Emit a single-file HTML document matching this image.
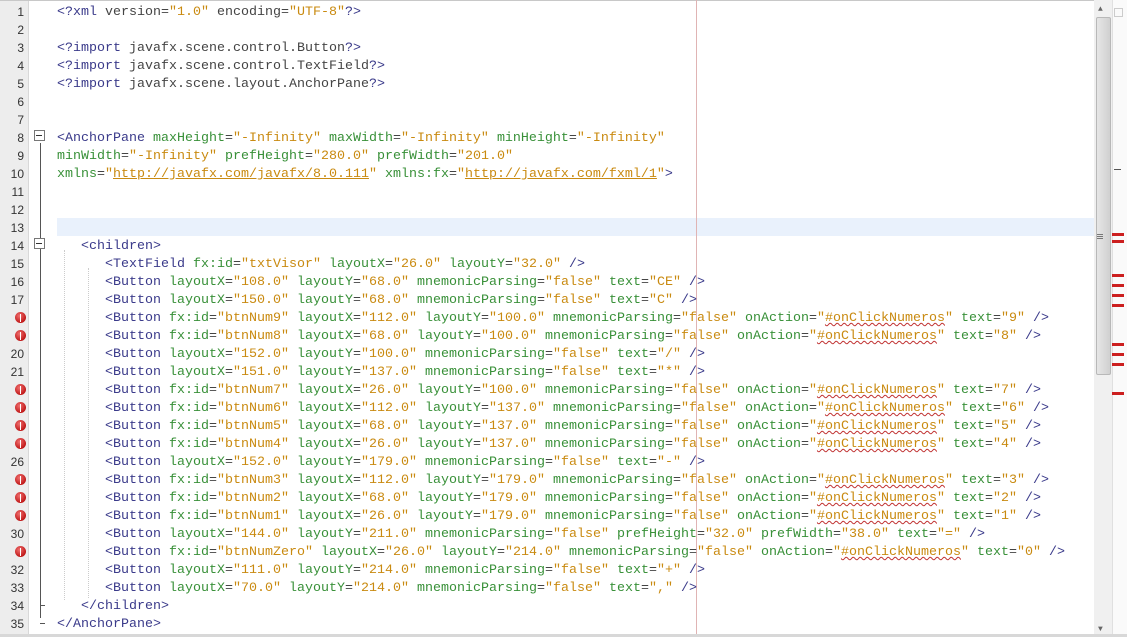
<!DOCTYPE html>
<html><head><meta charset="utf-8"><style>
body{margin:0;width:1127px;height:637px;background:#fff;position:relative;overflow:hidden;font-family:"Liberation Mono",monospace;font-size:13.33px}
.g{position:absolute;left:0;top:0;width:28px;height:637px;background:#ededed;border-right:1px solid #d8d8d8}
.ln{position:absolute;left:0;width:24px;text-align:right;color:#333;font-family:"Liberation Sans",sans-serif;font-size:12px;line-height:18px;margin-top:1px}
.l{position:absolute;left:57px;white-space:pre;line-height:18px;color:#444;margin-top:2px}
.t{color:#3a3a8a}.a{color:#389038}.v{color:#c98a10}.u{text-decoration:underline}
.e{text-decoration:underline wavy #c03030;text-decoration-thickness:1px}
.err{position:absolute;left:15px;width:11px;height:11px;border-radius:50%;background:radial-gradient(circle at 40% 35%,#f07070,#c01818 70%);}
.err:after{content:"";position:absolute;left:5px;top:2px;width:1px;height:5px;background:#fff;box-shadow:0 3px 0 -0px #fff}
.mk{position:absolute;left:1112px;width:12px;height:3px;background:#cc1f1f}
</style></head><body>
<div class="g"></div>
<div style="position:absolute;left:0;top:0;width:1127px;height:1px;background:#c8c8c8"></div>
<div style="position:absolute;left:57px;top:218px;width:1037px;height:18px;background:#e9f1fc"></div>
<div style="position:absolute;left:696px;top:0;width:1px;height:637px;background:#e0b4b4"></div>
<div style="position:absolute;left:40px;top:143px;width:1px;height:475px;background:#555"></div>
<div style="position:absolute;left:34px;top:130px;width:9px;height:9px;border:1px solid #777;background:#fff"></div>
<div style="position:absolute;left:36px;top:135px;width:6px;height:1px;background:#333"></div>
<div style="position:absolute;left:34px;top:238px;width:9px;height:9px;border:1px solid #777;background:#fff"></div>
<div style="position:absolute;left:36px;top:243px;width:6px;height:1px;background:#333"></div>
<div style="position:absolute;left:40px;top:605px;width:5px;height:1px;background:#555"></div>
<div style="position:absolute;left:40px;top:623px;width:5px;height:1px;background:#555"></div>
<div style="position:absolute;left:64px;top:250px;width:0;height:350px;border-left:1px dotted #ccc"></div>
<div style="position:absolute;left:88px;top:268px;width:0;height:330px;border-left:1px dotted #ccc"></div>
<!-- scrollbar -->
<div style="position:absolute;left:1094px;top:0;width:18px;height:637px;background:#f0f0f0"></div>
<div style="position:absolute;left:1096px;top:17px;width:13px;height:356px;background:linear-gradient(90deg,#e6e6e6,#d0d0d0);border:1px solid #b8b8b8;border-radius:2px"></div>
<div style="position:absolute;left:1098px;top:5px;color:#666;font-size:8px">▲</div>
<div style="position:absolute;left:1098px;top:625px;color:#666;font-size:8px">▼</div>
<div style="position:absolute;left:1112px;top:0;width:15px;height:637px;background:#fafafa;border-left:1px solid #e0e0e0"></div>
<div style="position:absolute;left:1114px;top:8px;width:7px;height:7px;border:1px solid #ccc"></div>
<div style="position:absolute;left:1114px;top:169px;width:7px;height:1px;background:#555"></div>
<div class="mk" style="top:233px"></div><div class="mk" style="top:240px"></div>
<div class="mk" style="top:274px"></div><div class="mk" style="top:284px"></div><div class="mk" style="top:294px"></div><div class="mk" style="top:304px"></div>
<div class="mk" style="top:343px"></div><div class="mk" style="top:353px"></div><div class="mk" style="top:363px"></div><div class="mk" style="top:392px"></div>
<div style="position:absolute;left:1097px;top:234px;width:6px;height:1px;background:#777;box-shadow:0 2px 0 #777,0 4px 0 #777"></div>

<div class="ln" style="top:2px">1</div><div class="ln" style="top:20px">2</div><div class="ln" style="top:38px">3</div><div class="ln" style="top:56px">4</div><div class="ln" style="top:74px">5</div><div class="ln" style="top:92px">6</div><div class="ln" style="top:110px">7</div><div class="ln" style="top:128px">8</div><div class="ln" style="top:146px">9</div><div class="ln" style="top:164px">10</div><div class="ln" style="top:182px">11</div><div class="ln" style="top:200px">12</div><div class="ln" style="top:218px">13</div><div class="ln" style="top:236px">14</div><div class="ln" style="top:254px">15</div><div class="ln" style="top:272px">16</div><div class="ln" style="top:290px">17</div>
<div class="err" style="top:312px"></div><div class="err" style="top:330px"></div>
<div class="ln" style="top:344px">20</div><div class="ln" style="top:362px">21</div>
<div class="err" style="top:384px"></div><div class="err" style="top:402px"></div><div class="err" style="top:420px"></div><div class="err" style="top:438px"></div>
<div class="ln" style="top:452px">26</div>
<div class="err" style="top:474px"></div><div class="err" style="top:492px"></div><div class="err" style="top:510px"></div>
<div class="ln" style="top:524px">30</div>
<div class="err" style="top:546px"></div>
<div class="ln" style="top:560px">32</div><div class="ln" style="top:578px">33</div><div class="ln" style="top:596px">34</div><div class="ln" style="top:614px">35</div>

<div class="l" style="top:2px"><span class="t">&lt;?xml</span> version=<span class="v">"1.0"</span> encoding=<span class="v">"UTF-8"</span><span class="t">?&gt;</span></div>
<div class="l" style="top:38px"><span class="t">&lt;?import</span> javafx.scene.control.Button<span class="t">?&gt;</span></div>
<div class="l" style="top:56px"><span class="t">&lt;?import</span> javafx.scene.control.TextField<span class="t">?&gt;</span></div>
<div class="l" style="top:74px"><span class="t">&lt;?import</span> javafx.scene.layout.AnchorPane<span class="t">?&gt;</span></div>
<div class="l" style="top:128px"><span class="t">&lt;AnchorPane</span> <span class="a">maxHeight</span>=<span class="v">"-Infinity"</span> <span class="a">maxWidth</span>=<span class="v">"-Infinity"</span> <span class="a">minHeight</span>=<span class="v">"-Infinity"</span></div>
<div class="l" style="top:146px"><span class="a">minWidth</span>=<span class="v">"-Infinity"</span> <span class="a">prefHeight</span>=<span class="v">"280.0"</span> <span class="a">prefWidth</span>=<span class="v">"201.0"</span></div>
<div class="l" style="top:164px"><span class="a">xmlns</span>=<span class="v">"<span class="u">http://javafx.com/javafx/8.0.111</span>"</span> <span class="a">xmlns:fx</span>=<span class="v">"<span class="u">http://javafx.com/fxml/1</span>"</span><span class="t">&gt;</span></div>
<div class="l" style="top:236px">   <span class="t">&lt;children&gt;</span></div>
<div class="l" style="top:254px">      <span class="t">&lt;TextField</span> <span class="a">fx:id</span>=<span class="v">"txtVisor"</span> <span class="a">layoutX</span>=<span class="v">"26.0"</span> <span class="a">layoutY</span>=<span class="v">"32.0"</span> <span class="t">/&gt;</span></div>
<div class="l" style="top:272px">      <span class="t">&lt;Button</span> <span class="a">layoutX</span>=<span class="v">"108.0"</span> <span class="a">layoutY</span>=<span class="v">"68.0"</span> <span class="a">mnemonicParsing</span>=<span class="v">"false"</span> <span class="a">text</span>=<span class="v">"CE"</span> <span class="t">/&gt;</span></div>
<div class="l" style="top:290px">      <span class="t">&lt;Button</span> <span class="a">layoutX</span>=<span class="v">"150.0"</span> <span class="a">layoutY</span>=<span class="v">"68.0"</span> <span class="a">mnemonicParsing</span>=<span class="v">"false"</span> <span class="a">text</span>=<span class="v">"C"</span> <span class="t">/&gt;</span></div>
<div class="l" style="top:308px">      <span class="t">&lt;Button</span> <span class="a">fx:id</span>=<span class="v">"btnNum9"</span> <span class="a">layoutX</span>=<span class="v">"112.0"</span> <span class="a">layoutY</span>=<span class="v">"100.0"</span> <span class="a">mnemonicParsing</span>=<span class="v">"false"</span> <span class="a">onAction</span>=<span class="v">"<span class="e">#onClickNumeros</span>"</span> <span class="a">text</span>=<span class="v">"9"</span> <span class="t">/&gt;</span></div>
<div class="l" style="top:326px">      <span class="t">&lt;Button</span> <span class="a">fx:id</span>=<span class="v">"btnNum8"</span> <span class="a">layoutX</span>=<span class="v">"68.0"</span> <span class="a">layoutY</span>=<span class="v">"100.0"</span> <span class="a">mnemonicParsing</span>=<span class="v">"false"</span> <span class="a">onAction</span>=<span class="v">"<span class="e">#onClickNumeros</span>"</span> <span class="a">text</span>=<span class="v">"8"</span> <span class="t">/&gt;</span></div>
<div class="l" style="top:344px">      <span class="t">&lt;Button</span> <span class="a">layoutX</span>=<span class="v">"152.0"</span> <span class="a">layoutY</span>=<span class="v">"100.0"</span> <span class="a">mnemonicParsing</span>=<span class="v">"false"</span> <span class="a">text</span>=<span class="v">"/"</span> <span class="t">/&gt;</span></div>
<div class="l" style="top:362px">      <span class="t">&lt;Button</span> <span class="a">layoutX</span>=<span class="v">"151.0"</span> <span class="a">layoutY</span>=<span class="v">"137.0"</span> <span class="a">mnemonicParsing</span>=<span class="v">"false"</span> <span class="a">text</span>=<span class="v">"*"</span> <span class="t">/&gt;</span></div>
<div class="l" style="top:380px">      <span class="t">&lt;Button</span> <span class="a">fx:id</span>=<span class="v">"btnNum7"</span> <span class="a">layoutX</span>=<span class="v">"26.0"</span> <span class="a">layoutY</span>=<span class="v">"100.0"</span> <span class="a">mnemonicParsing</span>=<span class="v">"false"</span> <span class="a">onAction</span>=<span class="v">"<span class="e">#onClickNumeros</span>"</span> <span class="a">text</span>=<span class="v">"7"</span> <span class="t">/&gt;</span></div>
<div class="l" style="top:398px">      <span class="t">&lt;Button</span> <span class="a">fx:id</span>=<span class="v">"btnNum6"</span> <span class="a">layoutX</span>=<span class="v">"112.0"</span> <span class="a">layoutY</span>=<span class="v">"137.0"</span> <span class="a">mnemonicParsing</span>=<span class="v">"false"</span> <span class="a">onAction</span>=<span class="v">"<span class="e">#onClickNumeros</span>"</span> <span class="a">text</span>=<span class="v">"6"</span> <span class="t">/&gt;</span></div>
<div class="l" style="top:416px">      <span class="t">&lt;Button</span> <span class="a">fx:id</span>=<span class="v">"btnNum5"</span> <span class="a">layoutX</span>=<span class="v">"68.0"</span> <span class="a">layoutY</span>=<span class="v">"137.0"</span> <span class="a">mnemonicParsing</span>=<span class="v">"false"</span> <span class="a">onAction</span>=<span class="v">"<span class="e">#onClickNumeros</span>"</span> <span class="a">text</span>=<span class="v">"5"</span> <span class="t">/&gt;</span></div>
<div class="l" style="top:434px">      <span class="t">&lt;Button</span> <span class="a">fx:id</span>=<span class="v">"btnNum4"</span> <span class="a">layoutX</span>=<span class="v">"26.0"</span> <span class="a">layoutY</span>=<span class="v">"137.0"</span> <span class="a">mnemonicParsing</span>=<span class="v">"false"</span> <span class="a">onAction</span>=<span class="v">"<span class="e">#onClickNumeros</span>"</span> <span class="a">text</span>=<span class="v">"4"</span> <span class="t">/&gt;</span></div>
<div class="l" style="top:452px">      <span class="t">&lt;Button</span> <span class="a">layoutX</span>=<span class="v">"152.0"</span> <span class="a">layoutY</span>=<span class="v">"179.0"</span> <span class="a">mnemonicParsing</span>=<span class="v">"false"</span> <span class="a">text</span>=<span class="v">"-"</span> <span class="t">/&gt;</span></div>
<div class="l" style="top:470px">      <span class="t">&lt;Button</span> <span class="a">fx:id</span>=<span class="v">"btnNum3"</span> <span class="a">layoutX</span>=<span class="v">"112.0"</span> <span class="a">layoutY</span>=<span class="v">"179.0"</span> <span class="a">mnemonicParsing</span>=<span class="v">"false"</span> <span class="a">onAction</span>=<span class="v">"<span class="e">#onClickNumeros</span>"</span> <span class="a">text</span>=<span class="v">"3"</span> <span class="t">/&gt;</span></div>
<div class="l" style="top:488px">      <span class="t">&lt;Button</span> <span class="a">fx:id</span>=<span class="v">"btnNum2"</span> <span class="a">layoutX</span>=<span class="v">"68.0"</span> <span class="a">layoutY</span>=<span class="v">"179.0"</span> <span class="a">mnemonicParsing</span>=<span class="v">"false"</span> <span class="a">onAction</span>=<span class="v">"<span class="e">#onClickNumeros</span>"</span> <span class="a">text</span>=<span class="v">"2"</span> <span class="t">/&gt;</span></div>
<div class="l" style="top:506px">      <span class="t">&lt;Button</span> <span class="a">fx:id</span>=<span class="v">"btnNum1"</span> <span class="a">layoutX</span>=<span class="v">"26.0"</span> <span class="a">layoutY</span>=<span class="v">"179.0"</span> <span class="a">mnemonicParsing</span>=<span class="v">"false"</span> <span class="a">onAction</span>=<span class="v">"<span class="e">#onClickNumeros</span>"</span> <span class="a">text</span>=<span class="v">"1"</span> <span class="t">/&gt;</span></div>
<div class="l" style="top:524px">      <span class="t">&lt;Button</span> <span class="a">layoutX</span>=<span class="v">"144.0"</span> <span class="a">layoutY</span>=<span class="v">"211.0"</span> <span class="a">mnemonicParsing</span>=<span class="v">"false"</span> <span class="a">prefHeight</span>=<span class="v">"32.0"</span> <span class="a">prefWidth</span>=<span class="v">"38.0"</span> <span class="a">text</span>=<span class="v">"="</span> <span class="t">/&gt;</span></div>
<div class="l" style="top:542px">      <span class="t">&lt;Button</span> <span class="a">fx:id</span>=<span class="v">"btnNumZero"</span> <span class="a">layoutX</span>=<span class="v">"26.0"</span> <span class="a">layoutY</span>=<span class="v">"214.0"</span> <span class="a">mnemonicParsing</span>=<span class="v">"false"</span> <span class="a">onAction</span>=<span class="v">"<span class="e">#onClickNumeros</span>"</span> <span class="a">text</span>=<span class="v">"0"</span> <span class="t">/&gt;</span></div>
<div class="l" style="top:560px">      <span class="t">&lt;Button</span> <span class="a">layoutX</span>=<span class="v">"111.0"</span> <span class="a">layoutY</span>=<span class="v">"214.0"</span> <span class="a">mnemonicParsing</span>=<span class="v">"false"</span> <span class="a">text</span>=<span class="v">"+"</span> <span class="t">/&gt;</span></div>
<div class="l" style="top:578px">      <span class="t">&lt;Button</span> <span class="a">layoutX</span>=<span class="v">"70.0"</span> <span class="a">layoutY</span>=<span class="v">"214.0"</span> <span class="a">mnemonicParsing</span>=<span class="v">"false"</span> <span class="a">text</span>=<span class="v">","</span> <span class="t">/&gt;</span></div>
<div class="l" style="top:596px">   <span class="t">&lt;/children&gt;</span></div>
<div class="l" style="top:614px"><span class="t">&lt;/AnchorPane&gt;</span></div>
<div style="position:absolute;left:0;top:634px;width:1127px;height:3px;background:#d8d8d8"></div>
</body></html>
